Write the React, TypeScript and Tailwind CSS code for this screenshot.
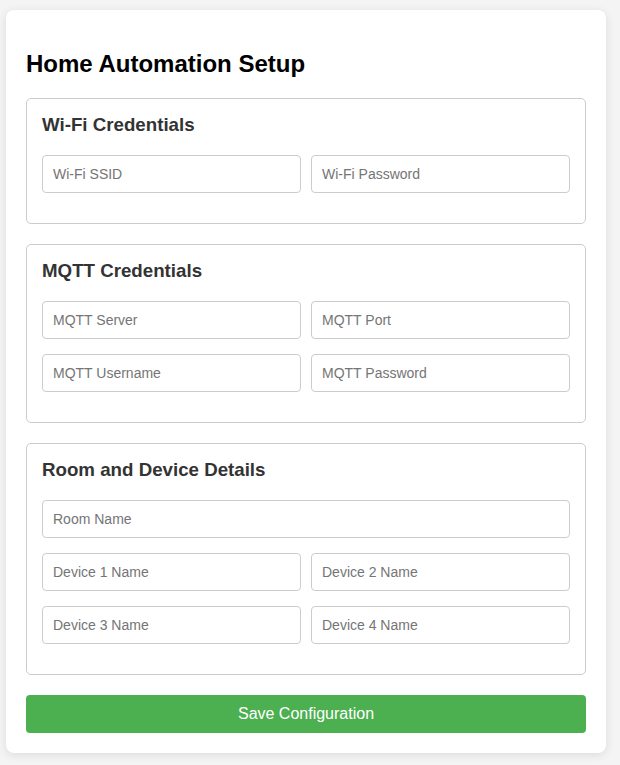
const Field = ({ placeholder }: { placeholder: string }) => (
  <input
    type="text"
    placeholder={placeholder}
    className="block w-full h-[38px] rounded-[4px] border border-[#ccc] bg-white px-[10px] text-[14px] text-[#333] placeholder:text-[#757575] outline-none"
  />
);

const Section = ({ title, children }: { title: string; children: React.ReactNode }) => (
  <div className="mb-5 rounded-[5px] border border-[#ccc] px-[15px] pt-[15px] pb-[15px]">
    <h3 className="mb-[19px] text-[18.72px] font-bold leading-[22px] text-[#333]">{title}</h3>
    {children}
  </div>
);

const Row = ({ children }: { children: React.ReactNode }) => (
  <div className="mb-[15px] grid grid-cols-2 gap-[10px]">{children}</div>
);

export default function App() {
  return (
    <div className="min-h-screen bg-[#f4f4f4] pt-[10px] font-['Liberation_Sans',Arial,sans-serif]">
      <div className="ml-[6px] w-[600px] rounded-[8px] bg-white p-5 shadow-[0_2px_10px_rgba(0,0,0,0.1)]">
        <h2 className="my-5 text-[24px] font-bold leading-[1.15] text-black">Home Automation Setup</h2>

        <Section title="Wi-Fi Credentials">
          <Row>
            <Field placeholder="Wi-Fi SSID" />
            <Field placeholder="Wi-Fi Password" />
          </Row>
        </Section>

        <Section title="MQTT Credentials">
          <Row>
            <Field placeholder="MQTT Server" />
            <Field placeholder="MQTT Port" />
          </Row>
          <Row>
            <Field placeholder="MQTT Username" />
            <Field placeholder="MQTT Password" />
          </Row>
        </Section>

        <Section title="Room and Device Details">
          <div className="mb-[15px]">
            <Field placeholder="Room Name" />
          </div>
          <Row>
            <Field placeholder="Device 1 Name" />
            <Field placeholder="Device 2 Name" />
          </Row>
          <Row>
            <Field placeholder="Device 3 Name" />
            <Field placeholder="Device 4 Name" />
          </Row>
        </Section>

        <button
          type="button"
          className="block h-[38px] w-full rounded-[4px] bg-[#4caf50] text-[16px] text-white"
        >
          Save Configuration
        </button>
      </div>
    </div>
  );
}
